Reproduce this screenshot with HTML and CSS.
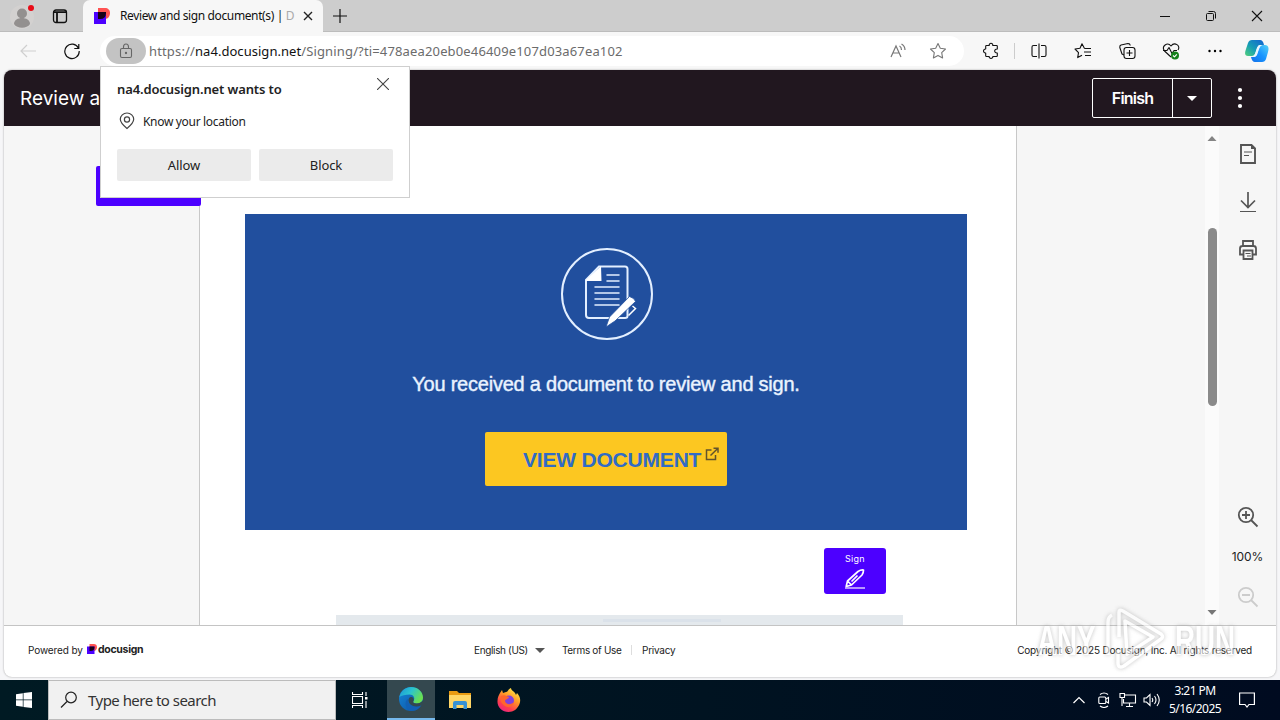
FILE: index.html
```html
<!DOCTYPE html>
<html lang="en">
<head>
<meta charset="utf-8">
<title>Review and sign document(s) | Docusign</title>
<link rel="stylesheet" href="styles.css">
</head>
<body>
<div class="desktop">
  <div class="tabstrip">
    <svg class="avatar" width="28" height="28" viewBox="0 0 28 28"><circle cx="14" cy="15" r="12" fill="#d3d1d0"/><circle cx="14" cy="11.500" r="5" fill="#93908f"/><path d="M6 22c0-8 16-8 16 0-3 5-13 5-16 0z" fill="#93908f"/><circle cx="23" cy="6" r="3" fill="#e80b17"/></svg>
    <svg class="tabmenu" width="16" height="16" viewBox="0 0 16 16" fill="none" stroke="#111" stroke-width="1.300"><rect x="1.500" y="2" width="13" height="12.500" rx="2.500"/><path d="M1.500 4.200h13M5 4.500v9.800" stroke-width="1.800"/></svg>
    <div class="tab">
      <svg class="favicon" width="16" height="16" viewBox="0 0 16 16"><path d="M4 0h7c3 0 5 2 5 5s-2 6-5 6H4z" fill="#ff5252"/><rect y="4" width="12" height="12" fill="#4c00ff"/><path d="M4 4h8v1q0 6-6 6H4z" fill="#180018"/></svg>
      <span class="tab-title">Review and sign document(s) | <i>D</i></span>
      <svg class="tab-close" width="10" height="10" viewBox="0 0 10 10" stroke="#222" stroke-width="1.400"><path d="M1 1l8 8M9 1L1 9"/></svg>
    </div>
    <svg class="newtab" width="14" height="14" viewBox="0 0 14 14" stroke="#111" stroke-width="1.200"><path d="M7 0v14M0 7h14"/></svg>
    <div class="window-buttons">
      <svg width="12" height="12" viewBox="0 0 12 12" stroke="#111" fill="none"><path d="M1 6.500h10"/></svg>
      <svg width="12" height="12" viewBox="0 0 12 12" stroke="#111" fill="none"><rect x="1.500" y="3.500" width="7" height="7" rx="1"/><path d="M3.500 1.500h5q2 0 2 2v5"/></svg>
      <svg width="12" height="12" viewBox="0 0 12 12" stroke="#111" fill="none" stroke-width="1.100"><path d="M1 1l10 10M11 1L1 11"/></svg>
    </div>
  </div>

  <div class="toolbar">
    <svg class="back" width="16" height="14" viewBox="0 0 16 14" stroke="#cfcfcf" fill="none" stroke-width="1.200"><path d="M16 7H1M7 1L1 7l6 6"/></svg>
    <svg class="reload" width="18" height="18" viewBox="0 0 18 18" stroke="#111" fill="none" stroke-width="1.200"><path d="M15.500 6.200A7.200 7.200 0 1 0 16.200 9M15.800 2v4.500h-4.500"/></svg>
    <div class="address">
      <span class="lock"><svg width="14" height="16" viewBox="0 0 14 16" fill="none" stroke="#666" stroke-width="1.100"><rect x="1.500" y="5.500" width="11" height="9" rx="1.500"/><path d="M4.500 5.500V4a2.500 3 0 0 1 5 0v1.500"/><circle cx="7" cy="10" r=".6" fill="#555"/></svg></span>
      <span class="url">https://<b>na4.docusign.net</b>/Signing/?ti=478aea20eb0e46409e107d03a67ea102</span>
      <svg class="read" width="16" height="16" viewBox="0 0 16 16" fill="none" stroke="#777" stroke-width="1.200"><path d="M1 14L6 3l5 11M3 10h6M9.500 3q2 1 2 4M11.500 1q3.500 2 3.500 6"/></svg>
      <svg class="star" width="18" height="18" viewBox="0 0 18 18" fill="none" stroke="#777" stroke-width="1.100" stroke-linejoin="round"><path d="M9 1.500l2.300 4.700 5.200.8-3.800 3.700.9 5.200L9 13.400l-4.600 2.500.9-5.200L1.500 7l5.200-.8z"/></svg>
    </div>
    <div class="tools">
      <svg width="18" height="18" viewBox="0 0 18 18" class="ico"><path d="M4.500 3.500h2.700c-.4-3 4-3 3.600 0h3.700q.8 0 .8.800V7c-3.500-.3-3.500 4.300 0 4v2.700q0 .8-.8.800h-3.700c.4 2.500-4 2.500-3.600 0H4.500q-.8 0-.8-.8V11C.8 11.300.8 6.700 3.700 7V4.300q0-.8.8-.8z"/></svg>
      <span class="divider"></span>
      <svg width="18" height="18" viewBox="0 0 18 18" class="ico"><path d="M7 3.500H3.500q-1.500 0-1.500 1.500v8q0 1.500 1.500 1.500H7M11 3.500h3.500Q16 3.500 16 5v8q0 1.500-1.500 1.500H11M9 1.500v15"/></svg>
      <svg width="18" height="18" viewBox="0 0 18 18" class="ico"><path d="M10.500 6.500L8 1.800 6 6.300l-5 .7L4.500 10.600l-.8 5L8 13.200M10.500 6.500h6.500M10 10h7M11 13.500h6"/></svg>
      <svg width="18" height="18" viewBox="0 0 18 18" class="ico"><path d="M6 13L4 12 1.800 5.500Q1.500 3.500 3 3l7-1.500q2 0 2.300 2"/><rect x="6" y="5.500" width="11" height="11" rx="2.500"/><path d="M11.500 8v6M8.500 11h6"/></svg>
      <svg width="18" height="18" viewBox="0 0 18 18" class="ico"><path d="M9 15L2.500 9C-1 4 5.500-.5 9 4c3.500-4.500 10-.5 7 4M1 8.500h4l2-3 3 6 2-3h3"/><circle cx="13" cy="13.500" r="4" fill="#16811c" stroke="none"/><path d="M11 13.500l1.500 1.300 2.300-2.500" stroke="#fff"/></svg>
      <svg width="18" height="18" viewBox="0 0 18 18"><circle cx="3.500" cy="9" r="1.200"/><circle cx="9" cy="9" r="1.200"/><circle cx="14.500" cy="9" r="1.200"/></svg>
    </div>
    <svg class="copilot" width="26" height="26" viewBox="0 0 26 26"><defs><linearGradient id="cpa" x1="0" y1="1" x2="1" y2="0"><stop offset="0" stop-color="#52d07b"/><stop offset=".45" stop-color="#159db5"/><stop offset="1" stop-color="#1261d2"/></linearGradient><linearGradient id="cpb" x1="0" y1="1" x2="1" y2="0"><stop offset="0" stop-color="#136fe9"/><stop offset=".5" stop-color="#1894ff"/><stop offset="1" stop-color="#56d2f6"/></linearGradient></defs><path d="M8 2h8q3 0 4 5h-4q-2 0-3 3l-2 6q-1 2-3 2H4c-4 0-3-4-2-7l2-6q1-3 4-3z" fill="url(#cpa)"/><path d="M18 24H11q-3 0-4-5h2q3 0 4-3l2-6q1-3 4-3h2c4 0 4 4 3 7l-2 7q-1 3-4 3z" fill="url(#cpb)"/><path d="M13 10q1-3 3-3h2q-2 1-3 4l-2 6q-1 2-3 2H8q2-1 3-3z" fill="#e9f7ff"/></svg>
  </div>

  <div class="app">
    <header class="app-header">
      <span class="app-title">Review a</span>
      <div class="finish"><span class="finish-label">Finish</span><span class="finish-drop"><svg width="10" height="5" viewBox="0 0 10 5"><path d="M0 0h10L5 5z" fill="#fff"/></svg></span></div>
      <svg class="more" width="6" height="22" viewBox="0 0 6 22" fill="#fff"><circle cx="3" cy="3" r="2.100"/><circle cx="3" cy="11" r="2.100"/><circle cx="3" cy="19" r="2.100"/></svg>
    </header>
    <div class="workspace">
      <div class="page">
        <section class="banner">
          <svg class="emblem" width="94" height="94" viewBox="0 0 94 94"><circle cx="47" cy="47" r="45" fill="none" stroke="#e3efff" stroke-width="2"/><path d="M39 19.500h26q2.500 0 2.500 2.500v47q0 2-2.500 2H29q-3 0-3-3V33z" fill="none" stroke="#e3efff" stroke-width="2"/><path d="M41 19L26 33v1h15.500z" fill="#fff"/><path d="M47 28h12M47 34h12M35 40h24M35 46h24M35 52h24M35 58h24" stroke="#e3efff" stroke-width="1.500" stroke-linecap="round"/><path d="M69.500 49.500q5 1.500 6 5L55 74l-9 6 3.500-10z" fill="#fff" stroke="#214f9e" stroke-width=".8"/><path d="M72.500 59l3 2.500-7 7" fill="none" stroke="#fff" stroke-width="1.500"/></svg>
          <p class="message">You received a document to review and sign.</p>
          <div class="view"><span class="view-label">VIEW DOCUMENT</span><svg class="ext" width="14" height="14" viewBox="0 0 14 14" fill="none" stroke="#62542c" stroke-width="1.500"><path d="M6.500 3H1.500v9.500h9V8M8.500 1.200H13v4.500M13 1.200L5.500 8.500"/></svg></div>
        </section>
        <div class="sign"><span>Sign</span><svg width="22" height="20" viewBox="0 0 22 20" fill="none" stroke="#fff" stroke-width="1.700" stroke-linejoin="round"><path d="M2.200 17.500l1.300-5.500L14 2.500q3-2 5.500-1.500Q19.500 4 18 6L7.500 16zM3.500 12l4 4M7.500 12.500l6-6"/><path d="M1 19h20" stroke-width="1.200"/></svg></div>
        <div class="strip"><span></span></div>
      </div>
      <div class="scroll">
        <svg width="10" height="5" viewBox="0 0 10 5"><path d="M.5 5h9L5 0z" fill="#858585"/></svg>
        <span class="thumb"></span>
        <svg width="10" height="5" viewBox="0 0 10 5"><path d="M.5 0h9L5 5z" fill="#777"/></svg>
      </div>
      <aside class="side">
        <svg width="22" height="22" viewBox="0 0 22 22" fill="none" stroke="#555" stroke-width="1.900"><path d="M4 2h10.500L18 5.500V20H4z"/><path d="M14 1l5 5h-5z" fill="#555" stroke="none"/><path d="M7 9h8M7 12.500h5" stroke-width="1.200"/></svg>
        <svg width="22" height="22" viewBox="0 0 22 22" fill="none" stroke="#555" stroke-width="1.700"><path d="M11 1v15M4 9.500l7 7 7-7"/><path d="M3 20.500h16" stroke-width="1.200"/></svg>
        <svg width="22" height="22" viewBox="0 0 22 22" fill="none" stroke="#555" stroke-width="1.800"><path d="M6 6.500V2h10v4.500M6 15.500H3V9.500Q3 7 5.500 7h11Q19 7 19 9.500v6h-3M6.500 11.500h9V20h-9z"/><path d="M8.500 14.500h5M10 17h4" stroke-width="1"/></svg>
        <svg class="zoom-in" width="22" height="22" viewBox="0 0 22 22" fill="none" stroke="#555" stroke-width="1.800"><circle cx="9" cy="9" r="7.200"/><path d="M14 14l6.500 6.500M9 5v8M5 9h8"/></svg>
        <span class="percent">100%</span>
        <svg width="22" height="22" viewBox="0 0 22 22" fill="none" stroke="#ccc" stroke-width="1.800"><circle cx="9" cy="9" r="7.200"/><path d="M14 14l6.500 6.500M5 9h8"/></svg>
      </aside>
    </div>
    <footer class="app-footer">
      <span class="powered">Powered by</span>
      <svg class="ds-mark" width="10" height="10" viewBox="0 0 16 16"><path d="M4 0h7c3 0 5 2 5 5s-2 6-5 6H4z" fill="#ff5252"/><rect y="4" width="12" height="12" fill="#4c00ff"/><path d="M4 4h8v1q0 6-6 6H4z" fill="#180018"/></svg>
      <b class="ds-name">docusign</b>
      <span class="lang">English (US)</span>
      <svg class="lang-arrow" width="10" height="5" viewBox="0 0 10 5"><path d="M0 0h10L5 5z" fill="#555"/></svg>
      <span class="terms">Terms of Use</span>
      <span class="foot-line"></span>
      <span class="privacy">Privacy</span>
      <span class="copyright">Copyright © 2025 Docusign, Inc. All rights reserved</span>
    </footer>
  </div>

  <div class="taskbar">
    <div class="start"><svg width="16" height="16" viewBox="0 0 16 16" fill="#fff"><path d="M0 2.300L6.800 1.200v6.400H0zM7.500 1.100L16 0v7.600H7.500zM0 8.300h6.800v6.500L0 13.800zM7.500 8.300H16V16l-8.500-1.100z"/></svg></div>
    <div class="search"><svg width="18" height="18" viewBox="0 0 18 18" fill="none" stroke="#222" stroke-width="1.200"><circle cx="11" cy="6.500" r="5.300"/><path d="M7 10.500L1 16.500"/></svg><span>Type here to search</span></div>
    <div class="task view-tasks"><svg width="16" height="16" viewBox="0 0 16 16" fill="none" stroke="#fff" stroke-width="1.100"><path d="M.5 0v2.500h10V0M.5 16v-2.500h10V16M.5 4.500h10v7H.5zM14 0v4M14 9v7"/><rect x="13" y="5" width="2.500" height="2.500" fill="#fff" stroke="none"/></svg></div>
    <div class="task active"><svg width="24" height="24" viewBox="0 0 24 24"><defs><linearGradient id="ea" x2="1" y2=".5"><stop stop-color="#1b93d8"/><stop offset=".5" stop-color="#2bc4cf"/><stop offset="1" stop-color="#6ae050"/></linearGradient><linearGradient id="eb" x2="1" y2="1"><stop stop-color="#1686d8"/><stop offset="1" stop-color="#0b51a0"/></linearGradient></defs><circle cx="12" cy="12" r="12" fill="url(#eb)"/><path d="M.3 10C2 3.500 7 0 12 0c7 0 12 5 12 10.500 0 4-3 6-6.500 6-3 0-4-1.500-3-2.500 2-3 0-6.500-4-6.500-4 0-8 1-10.200 2.500z" fill="url(#ea)"/><path d="M9 12c-1 6 6 9.500 13 6.500-3 5-8 6-11.500 5C5 20 6 13 9 12z" fill="#1260b4"/><path d="M14.500 14c-1 1 0 2.500 3 2.500 2.500 0 5-1 6.500-3v3L22 18.500c-6 2.500-12 0-12.500-5 0-2 1-3.500 2.500-3.500 2 0 3.500 2 2.500 4z" fill="#34484f"/></svg></div>
    <div class="task"><svg width="22" height="20" viewBox="0 0 22 20"><path d="M0 1h8l2 2h12v5H0z" fill="#e99b12"/><path d="M0 5h22v13H0z" fill="#ffd666"/><path d="M4 19v-6q0-2 2-2h10q2 0 2 2v6h-3.500v-4h-7v4z" fill="#3892d4"/></svg></div>
    <div class="task"><svg width="24" height="24" viewBox="0 0 24 24"><defs><linearGradient id="ff" x1=".8" x2=".2" y2="1"><stop stop-color="#fff14c"/><stop offset=".4" stop-color="#ff9827"/><stop offset=".75" stop-color="#ff3c4f"/><stop offset="1" stop-color="#e62289"/></linearGradient></defs><path d="M3 5l2-3 1 3 3-1c2 0 2-3 5-4 0 3 4 3 5 7l1-2c3 3 4 7 2.500 11-2 5-6 8-11 8C5 24 0 19 .5 13 .5 9 2 7 3 5z" fill="url(#ff)"/><circle cx="12" cy="12.500" r="5" fill="#8040dd"/><path d="M4 8c4-2 5 0 8 1 0 2-4 2-4 4 1 4 6 4 9 1-1 5-6 6-9 4-4-2-5-6-4-10z" fill="#ff652d"/></svg></div>
    <div class="tray">
      <svg width="12" height="8" viewBox="0 0 12 8" fill="none" stroke="#fff" stroke-width="1.200"><path d="M.5 7L6 1.500 11.500 7"/></svg>
      <svg class="meet" width="12" height="16" viewBox="0 0 12 16" fill="none" stroke="#fff" stroke-width="1.100"><rect x=".8" y="5" width="7" height="6.500" rx="1"/><path d="M8 7l2.500-1.500V11L8 9.500M2 2.500q4-3 8 0M2 14q4 3 8 0"/></svg>
      <svg class="net" width="18" height="16" viewBox="0 0 18 16" fill="none" stroke="#fff" stroke-width="1.100"><path d="M6 3h10.500v8H4.500V7M10.500 11v3M7 14.500h7"/><path d="M1 1.500h4.500v4H1zM3 5.500V14"/></svg>
      <svg class="vol" width="18" height="16" viewBox="0 0 18 16" fill="none" stroke="#fff" stroke-width="1.100"><path d="M1 6h2.500L7 2.500v11L3.500 10H1zM9 6q1.500 2 0 4M11.500 4q3 4 0 8M14 2q4.500 6 0 12"/></svg>
      <div class="clock"><span>3:21 PM</span><span>5/16/2025</span></div>
      <svg class="notify" width="16" height="16" viewBox="0 0 16 16" fill="none" stroke="#fff" stroke-width="1.200"><path d="M.6 1h14.800v11.500H10L8 15l-2-2.500H.6z"/></svg>
    </div>
  </div>

  <div class="start-flag"></div>

  <div class="permission">
    <div class="perm-head"><b>na4.docusign.net wants to</b><svg width="12" height="12" viewBox="0 0 12 12" stroke="#444" stroke-width="1.100"><path d="M0 0l12 12M12 0L0 12"/></svg></div>
    <div class="perm-row"><svg width="16" height="18" viewBox="0 0 16 18" fill="none" stroke="#444" stroke-width="1.200"><path d="M8 16.500Q1.300 11 1.300 7.300a6.700 6.300 0 0 1 13.400 0Q14.700 11 8 16.500z"/><circle cx="8" cy="7.500" r="2.600"/></svg><span>Know your location</span></div>
    <div class="perm-buttons"><span>Allow</span><span>Block</span></div>
  </div>

  <div class="watermark"><span>ANY</span><svg width="62" height="66" viewBox="0 0 62 66" fill="none" stroke="#fff" stroke-width="3.500" stroke-linejoin="round"><path d="M3 47V14q0-5 4-7M14 4v25M14 4q0-3 4-1l38 23q3 3 0 5L19 58q-6 3-6-3V42M20 13l28 16L22 46z"/></svg><span>RUN</span></div>
</div>
</body>
</html>
```
FILE: styles.css
```css
* { box-sizing: border-box; }
body { margin: 0; font-family: "Noto Sans", sans-serif; }
svg { display: block; flex: none; }
.desktop { position: relative; width: 1280px; height: 720px; overflow: hidden; display: flex; flex-direction: column; background: #f6f6f8; color: #222; white-space: nowrap; }

.tabstrip { flex: none; height: 32px; display: flex; align-items: center; background: #cdcdcd; border-bottom: 1px solid #bcbcbc; }
.avatar { margin: 0 0 0 8px; }
.tabmenu { margin-left: 16px; }
.tab { display: flex; align-items: center; width: 240px; height: 32px; margin-left: 15px; padding-left: 11px; background: #f7f7f7; border-radius: 7px 7px 0 0; }
.tab-title { width: 174px; margin-left: 10px; font-size: 12px; letter-spacing: -.38px; color: #111; }
.tab-title i { font-style: normal; color: #aaa; }
.tab-close { margin-left: 9px; }
.newtab { margin-left: 10px; }
.window-buttons { display: flex; gap: 34px; margin-left: auto; margin-right: 17px; }

.toolbar { flex: none; height: 38px; display: flex; align-items: center; background: #f7f7f7; }
.back { margin-left: 20px; }
.reload { margin-left: 27px; }
.address { display: flex; align-items: center; width: 864px; height: 30px; margin-left: 19px; padding-left: 6px; border-radius: 15px; background: #fff; }
.lock { display: flex; align-items: center; justify-content: center; width: 40px; height: 26px; border-radius: 13px; background: #c3c3c3; }
.url { width: 744px; margin-left: 3px; font-size: 13px; letter-spacing: .15px; color: #6b6b6b; }
.url b { font-weight: 400; color: #111; letter-spacing: .04px; }
.read { margin-left: -3px; }
.star { margin-left: 23px; }
.tools { display: flex; align-items: center; margin-left: 18px; gap: 26px; }
.tools .divider { width: 1px; height: 16px; margin: 0 -11px 0 -12px; background: #ccc; }
.tools .ico { fill: none; stroke: #111; stroke-width: 1.100; stroke-linejoin: round; }
.copilot { margin-left: 20px; }

.app { flex: none; height: 607px; margin: 0 4px; display: flex; flex-direction: column; border-radius: 8px; overflow: hidden; background: #fff; box-shadow: 0 0 2px #999; font-family: Inter, sans-serif; }
.app-header { flex: none; height: 56px; display: flex; align-items: center; padding-left: 16px; background: #21171f; color: #fff; }
.app-title { width: 1072px; font-size: 19px; }
.finish { display: flex; width: 120px; height: 40px; border: 1px solid #fff; border-radius: 2px; font-size: 16px; font-weight: 600; letter-spacing: -.8px; }
.finish-label { width: 80px; display: flex; align-items: center; justify-content: center; border-right: 1px solid #fff; padding-bottom: 1px; }
.finish-drop { flex: 1; display: flex; align-items: center; justify-content: center; }
.more { margin-left: 25px; }

.workspace { flex: none; height: 499px; display: flex; background: #f6f6f6; }
.page { width: 818px; margin-left: 195px; background: #fff; border: solid #c8c8c8; border-width: 0 1px; display: flex; flex-direction: column; padding: 88px 0 0 45px; }
.banner { flex: none; width: 722px; height: 316px; background: #214f9e; display: flex; flex-direction: column; align-items: center; padding-top: 33px; font-family: "Liberation Sans", Arial, sans-serif; }
.emblem { margin-left: 1px; }
.message { margin: 31px 0 0; line-height: 24px; font-size: 20px; color: #eaf3ff; -webkit-text-stroke: .4px #eaf3ff; letter-spacing: -.23px; }
.view { width: 242px; height: 54px; margin-top: 36px; padding-left: 38px; display: flex; align-items: center; background: #fcc721; border-radius: 2px; color: #316bc5; font-size: 21px; font-weight: 700; letter-spacing: -.2px; }
.view-label { width: 179px; padding-top: 1px; }
.ext { margin: -10px 0 0 3px; }
.sign { flex: none; width: 62px; height: 46px; margin: 18px 0 0 579px; padding-top: 5px; display: flex; flex-direction: column; align-items: center; gap: 4px; background: #4c00ff; border-radius: 3px; color: #fff; font-size: 9px; line-height: 12px; letter-spacing: .3px; }
.strip { flex: none; width: 567px; height: 10px; margin: 21px 0 0 91px; background: #e4e9ed; display: flex; }
.strip span { width: 118px; height: 3px; margin: 4px 0 0 267px; background: #dbe2ea; }
.scroll { width: 14px; margin-left: 188px; padding: 10px 0; display: flex; flex-direction: column; align-items: center; background: #fbfbfb; }
.thumb { flex: none; width: 9px; height: 178px; margin: 87px 0 204px; border-radius: 5px; background: #8a8a8a; }
.side { width: 57px; padding-top: 17px; display: flex; flex-direction: column; align-items: center; gap: 26px; }
.side .zoom-in { margin-top: 219px; }
.percent { font-size: 12px; line-height: 16px; color: #222; margin: -5px 0 -5px; letter-spacing: -.1px; }

.app-footer { flex: none; height: 52px; display: flex; align-items: center; padding: 0 24px 3px; border-top: 1px solid #c4c4c4; font-size: 10px; color: #222; }
.powered { width: 55px; letter-spacing: -.1px; }
.ds-mark { margin: -2px 0 0 4px; }
.ds-name { width: 46px; margin: -1px 0 0 1px; font-size: 10.500px; letter-spacing: -.3px; font-weight: 700; }
.lang { width: 54px; margin-left: 330px; letter-spacing: -.35px; }
.lang-arrow { margin-left: 7px; }
.terms { width: 60px; margin-left: 17px; letter-spacing: -.32px; }
.foot-line { width: 1px; height: 10px; margin-left: 9px; background: #ddd; }
.privacy { margin-left: 10px; letter-spacing: -.25px; }
.copyright { margin-left: auto; letter-spacing: -.2px; }

.taskbar { flex: none; height: 40px; margin-top: 3px; display: flex; background: linear-gradient(90deg, #001a23, #001321 55%, #000b20); color: #fff; }
.start { width: 48px; display: flex; align-items: center; justify-content: center; }
.search { width: 288px; display: flex; align-items: center; gap: 10px; padding-left: 12px; background: #f1f1f1; border: 1px solid #bcbcbc; color: #333; font-size: 15px; letter-spacing: -.53px; }
.search svg { margin-left: -1px; }
.task { width: 49px; display: flex; align-items: center; justify-content: center; }
.view-tasks { width: 51px; padding-right: 4px; }
.task.active { width: 48px; background: #34484f; border-bottom: 2px solid #76b9ed; }
.tray { flex: 1; display: flex; align-items: center; justify-content: flex-end; padding-right: 25px; }
.meet { margin-left: 13px; }
.net { margin-left: 9px; }
.vol { margin-left: 6px; }
.clock { width: 62px; margin-left: 3px; display: flex; flex-direction: column; align-items: center; font-size: 12px; line-height: 18px; letter-spacing: -.55px; }
.notify { margin-left: 13px; }

.permission { position: absolute; left: 100px; top: 66px; width: 310px; height: 132px; padding: 10px 16px; background: #fff; border: 1px solid #cfcfcf; }
.perm-head { display: flex; justify-content: space-between; height: 24px; font-size: 13px; line-height: 24px; }
.perm-head b { font-weight: 600; letter-spacing: -.12px; }
.perm-head svg { margin: 1px 4px 0 0; }
.perm-row { display: flex; align-items: center; gap: 8px; height: 20px; margin: 10px 0 18px 2px; font-size: 12px; letter-spacing: -.32px; }
.perm-buttons { display: flex; gap: 8px; font-size: 13px; }
.perm-buttons span { width: 134px; height: 32px; background: #ebebeb; border-radius: 2px; display: flex; align-items: center; justify-content: center; letter-spacing: -.1px; }
.start-flag { position: absolute; left: 96px; top: 166px; width: 105px; height: 40px; border-radius: 2px; background: #4c00ff; }
.watermark { position: absolute; left: 1037px; top: 607px; width: 200px; height: 68px; display: flex; align-items: center; gap: 8px; color: #fff; opacity: .6; font: 700 42px/1 "Liberation Sans", Arial, sans-serif; filter: drop-shadow(0 0 2px #999); }
.watermark span { display: block; width: 60px; transform: scaleX(.66); transform-origin: left; }
```
